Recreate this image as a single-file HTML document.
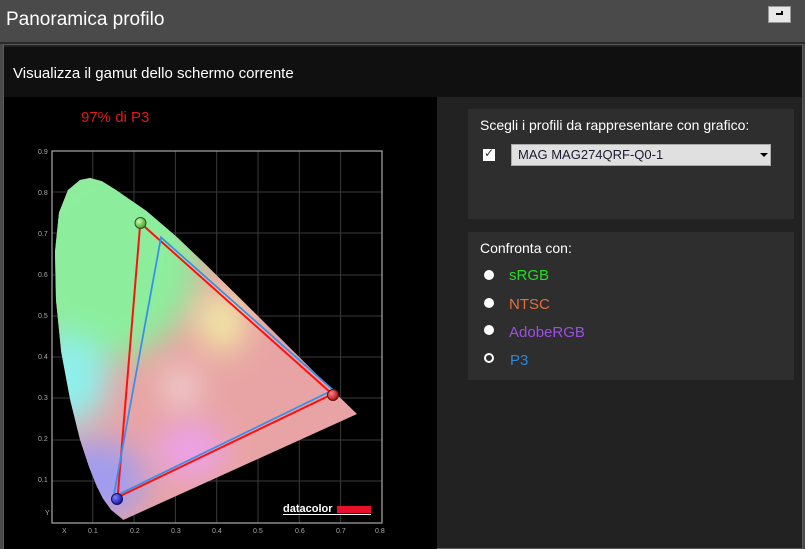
<!DOCTYPE html>
<html><head><meta charset="utf-8"><style>
*{margin:0;padding:0;box-sizing:border-box}
body{width:805px;height:549px;background:#4a4a4a;position:relative;overflow:hidden;font-family:"Liberation Sans","DejaVu Sans",sans-serif}
.t{position:absolute;white-space:nowrap}
</style></head><body>
<div class="t" style="left:6px;top:9px;font-size:19px;color:#fff">Panoramica profilo</div>
<div style="position:absolute;left:768px;top:6px;width:23px;height:17px;background:#e8e8e8;border:1px solid #999"><div style="position:absolute;left:7px;top:6px;width:7px;height:2px;background:#000"></div><div style="position:absolute;left:12px;top:4px;width:2px;height:4px;background:#000"></div></div>
<div style="position:absolute;left:0;top:42px;width:805px;height:2px;background:#2a2a2a"></div>
<div style="position:absolute;left:3px;top:44px;width:800px;height:505px;background:#222;border:1px solid #5a5a5a"></div>
<div style="position:absolute;left:4px;top:47px;width:798px;height:50px;background:#101010"></div>
<div class="t" style="left:13px;top:65px;font-size:15px;color:#fff">Visualizza il gamut dello schermo corrente</div>
<div style="position:absolute;left:4px;top:97px;width:433px;height:452px;background:#000"></div>
<div class="t" style="left:81px;top:109px;font-size:15px;color:#e01818">97% di P3</div>
<svg style="position:absolute;left:0;top:0" width="805" height="549">
<defs>
<clipPath id="c"><path d="M123.4,519.9 L111,509.7 L102.8,498.2 L96.8,486.2 L89.2,467.3 L79.9,439.2 L70.3,400.3 L61.2,351.8 L56,299.9 L55,251.9 L59,212.6 L68,190 L80,180 L90,178 L102,181.2 L115.4,189.6 L146.3,210.9 L176.1,236.4 L205.6,264.4 L234.9,293.2 L263.2,321.3 L289.1,347 L310.5,368.3 L337.1,394.8 L357,414 Z"/></clipPath>
<filter id="b" x="-50%" y="-50%" width="200%" height="200%"><feGaussianBlur stdDeviation="16"/></filter>
<radialGradient id="gg" cx="0.35" cy="0.35" r="0.7"><stop offset="0" stop-color="#d0ffb0"/><stop offset="1" stop-color="#3a9a20"/></radialGradient>
<radialGradient id="rg" cx="0.35" cy="0.35" r="0.7"><stop offset="0" stop-color="#ff8080"/><stop offset="1" stop-color="#a01010"/></radialGradient>
<radialGradient id="bg" cx="0.35" cy="0.35" r="0.7"><stop offset="0" stop-color="#8080ff"/><stop offset="1" stop-color="#1010a0"/></radialGradient>
</defs>
<g stroke="#3a3a3a" stroke-width="1">
<path d="M92.8,151V523M134,151V523M175.4,151V523M216.7,151V523M258,151V523M299.3,151V523M340.6,151V523"/>
<path d="M52,481H382M52,440H382M52,398H382M52,357H382M52,316H382M52,275H382M52,233H382M52,192H382"/>
</g>
<rect x="52" y="151" width="330" height="372" fill="none" stroke="#aaa" stroke-width="1.2"/>
<g clip-path="url(#c)">
<rect x="40" y="160" width="340" height="370" fill="#e8a4a4"/>
<g filter="url(#b)">
<ellipse cx="105" cy="255" rx="95" ry="105" fill="#8cee9c"/>
<ellipse cx="68" cy="380" rx="40" ry="45" fill="#8ef0ec"/>
<ellipse cx="95" cy="480" rx="50" ry="40" fill="#a09cf0"/>
<ellipse cx="190" cy="450" rx="35" ry="28" fill="#eca0ea"/>
<ellipse cx="222" cy="322" rx="22" ry="30" fill="#f2f0a4"/>
<circle cx="181" cy="387" r="14" fill="#f4f4f4"/>
</g>
</g>
<polygon points="140.3,222.9 332.3,394.1 117.6,497.3" fill="none" stroke="#ff1010" stroke-width="2"/>
<polygon points="161,237.4 333,390 113.5,497" fill="none" stroke="#3a90e8" stroke-width="1.8"/>
<circle cx="140.5" cy="223" r="5.5" fill="url(#gg)" stroke="#2a5a20"/>
<circle cx="333" cy="395" r="5.5" fill="url(#rg)" stroke="#601010"/>
<circle cx="117" cy="499" r="5.5" fill="url(#bg)" stroke="#101060"/>
<g font-size="7" fill="#aaa" font-family="Liberation Sans,sans-serif">
<text x="38" y="154">0.9</text><text x="38" y="195">0.8</text><text x="38" y="236">0.7</text><text x="38" y="277">0.6</text><text x="38" y="318">0.5</text><text x="38" y="359">0.4</text><text x="38" y="400">0.3</text><text x="38" y="441">0.2</text><text x="38" y="482">0.1</text><text x="45" y="515">Y</text>
<text x="62" y="533">X</text><text x="88" y="533">0.1</text><text x="130" y="533">0.2</text><text x="171" y="533">0.3</text><text x="212" y="533">0.4</text><text x="253" y="533">0.5</text><text x="295" y="533">0.6</text><text x="336" y="533">0.7</text><text x="375" y="533">0.8</text>
</g>
<text x="283" y="512" font-size="11" font-weight="bold" fill="#fff" font-family="Liberation Sans,sans-serif">datacolor</text>
<rect x="337" y="506" width="34" height="7" fill="#e8102a"/>
<rect x="283" y="514" width="88" height="1" fill="#fff"/>
</svg>
<div style="position:absolute;left:468px;top:109px;width:326px;height:110px;background:#2e2e2e"></div>
<div class="t" style="left:480px;top:117px;font-size:14px;color:#fff">Scegli i profili da rappresentare con grafico:</div>
<div style="position:absolute;left:483px;top:149px;width:12px;height:12px;background:#fff"></div>
<div class="t" style="left:484px;top:146px;font-size:12px;color:#333">✓</div>
<div style="position:absolute;left:511px;top:144px;width:260px;height:22px;background:#e0e0e0;border:1px solid #aaa"></div>
<div class="t" style="left:518px;top:147px;font-size:13px;color:#1a1a30">MAG MAG274QRF-Q0-1</div>
<div style="position:absolute;left:760px;top:153px;border-left:4px solid transparent;border-right:4px solid transparent;border-top:4px solid #000"></div>
<div style="position:absolute;left:468px;top:232px;width:326px;height:148px;background:#2e2e2e"></div>
<div class="t" style="left:480px;top:240px;font-size:14px;color:#fff">Confronta con:</div>
<div style="position:absolute;left:484px;top:270px;width:10px;height:10px;border-radius:50%;background:#fff"></div>
<div style="position:absolute;left:484px;top:298px;width:10px;height:10px;border-radius:50%;background:#fff"></div>
<div style="position:absolute;left:484px;top:325px;width:10px;height:10px;border-radius:50%;background:#fff"></div>
<div style="position:absolute;left:484px;top:353px;width:10px;height:10px;border-radius:50%;border:2.5px solid #fff"></div>
<div class="t" style="left:509px;top:267px;font-size:15px;color:#22dd22">sRGB</div>
<div class="t" style="left:509px;top:296px;font-size:15px;color:#e07040">NTSC</div>
<div class="t" style="left:509px;top:324px;font-size:15px;color:#9a50e0">AdobeRGB</div>
<div class="t" style="left:510px;top:352px;font-size:15px;color:#2a88d8">P3</div>
</body></html>
